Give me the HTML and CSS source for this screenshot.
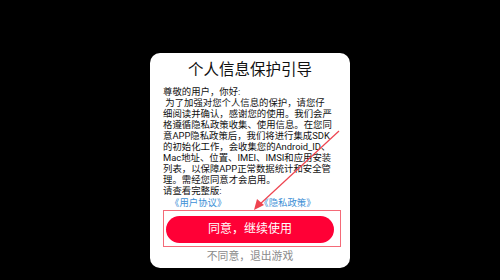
FILE: index.html
```html
<!DOCTYPE html>
<html lang="zh-CN">
<head>
<meta charset="utf-8">
<title>个人信息保护引导</title>
<link rel="stylesheet" href="styles.css">
</head>
<body>
<div class="screen">
  <div class="card">
    <div class="title">个人信息保护引导</div>
    <div class="body">
      <div class="line">尊敬的用户，你好:</div>
      <div class="line">&nbsp;为了加强对您个人信息的保护，请您仔</div>
      <div class="line">细阅读并确认，感谢您的使用。我们会严</div>
      <div class="line">格遵循隐私政策收集、使用信息。在您同</div>
      <div class="line">意APP隐私政策后，我们将进行集成SDK</div>
      <div class="line">的初始化工作，会收集您的Android_ID、</div>
      <div class="line">Mac地址、位置、IMEI、IMSI和应用安装</div>
      <div class="line">列表，以保障APP正常数据统计和安全管</div>
      <div class="line">理。需经您同意才会启用。</div>
      <div class="line">请查看完整版:</div>
    </div>
    <div class="links">
      <span class="link">《用户协议》</span>
      <span class="link">《隐私政策》</span>
    </div>
    <div class="agree">同意，继续使用</div>
    <div class="refuse">不同意，退出游戏</div>
    <div class="highlight"></div>
  </div>
  <svg class="arrow" width="500" height="280" viewBox="0 0 500 280">
    <line x1="339" y1="131" x2="259" y2="205" stroke="#ee4450" stroke-width="1.2"/>
    <polygon points="254,210 257,199 264,205" fill="#ee4450"/>
  </svg>
</div>
</body>
</html>
```
FILE: styles.css
```css
* { box-sizing: border-box; }
html, body {
  margin: 0;
  padding: 0;
  background: #000;
}
.screen {
  position: relative;
  width: 500px;
  height: 280px;
  background: #000;
  padding-top: 53px;
  padding-left: 150px;
  font-family: Roboto, "Noto Sans CJK SC", sans-serif;
}
.card {
  position: relative;
  width: 200px;
  height: 215px;
  background: #fff;
  border-radius: 10px;
  display: flex;
  flex-direction: column;
}
.title {
  margin-top: 6px;
  height: 22px;
  line-height: 22px;
  font-size: 15.5px;
  text-align: center;
  color: #111;
}
.body {
  margin-top: 5px;
  padding-left: 13px;
  font-size: 9.4px;
  line-height: 11px;
  color: #111;
}
.line { white-space: nowrap; }
.links {
  margin-top: 1px;
  display: flex;
  gap: 33px;
  padding-left: 20px;
  font-size: 9.4px;
  line-height: 11px;
  color: #3c8fd6;
}
.agree {
  margin-top: 8px;
  margin-left: 16px;
  width: 168px;
  height: 27px;
  border-radius: 14px;
  background: #ff0036;
  color: #fff;
  font-size: 12px;
  line-height: 27px;
  text-align: center;
}
.refuse {
  margin-top: 7px;
  height: 14px;
  line-height: 14px;
  font-size: 10.8px;
  color: #8a8a8a;
  text-align: center;
}
.highlight {
  position: absolute;
  left: 13px;
  top: 157px;
  width: 178px;
  height: 37px;
  border: 1px solid #f46a78;
}
.arrow {
  position: absolute;
  left: 0;
  top: 0;
  pointer-events: none;
}
```
